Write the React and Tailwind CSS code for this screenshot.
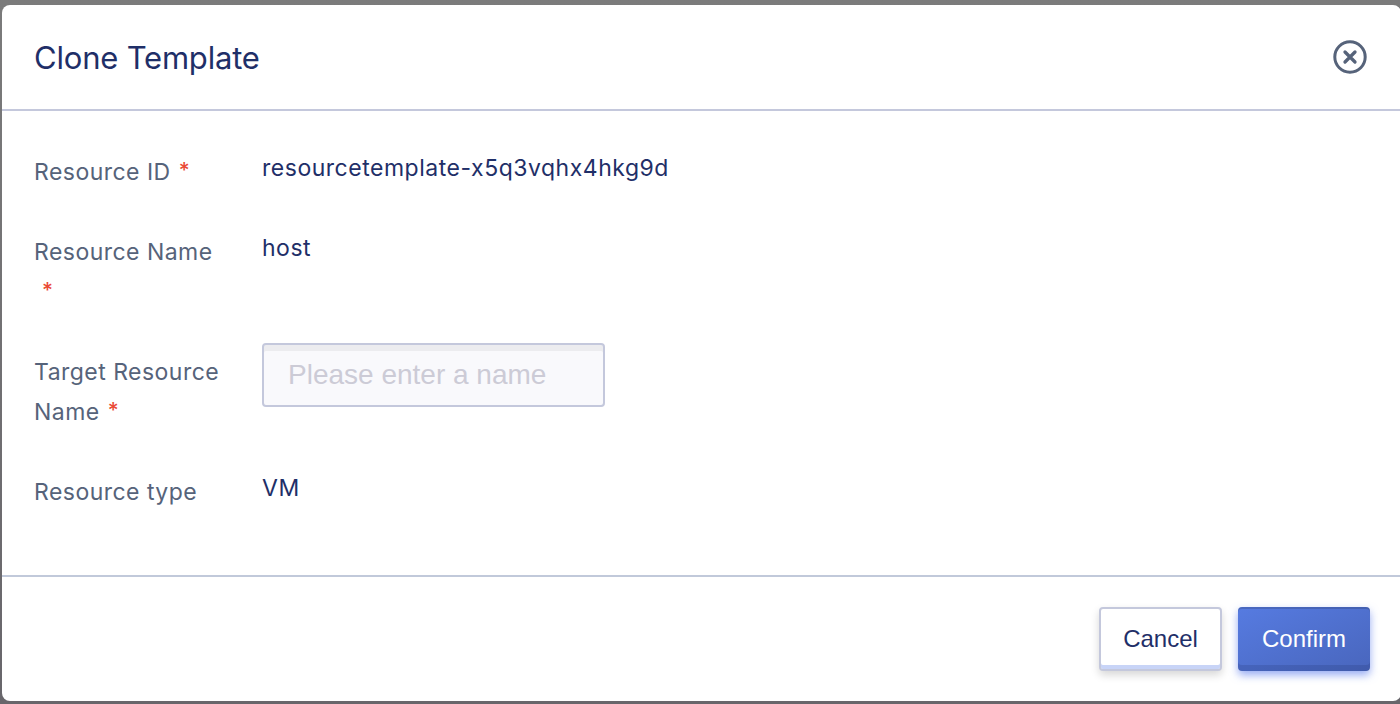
import React from "react";

function Field({ label, required, children }) {
  return (
    <div className="flex items-start">
      <div className="mr-10 w-[188px] shrink-0 pt-2 text-[23px] leading-10 tracking-[0.47px] text-[#56637a]">
        {label}
        {required && <span className="mb-0.5 ml-2 inline-block align-[2px] text-[21px] leading-5 font-medium tracking-normal text-[#ea4a36]">*</span>}
      </div>
      {children}
    </div>
  );
}

function Value({ children }) {
  return <div className="pt-1 text-[23px] leading-10 tracking-[0.52px] text-[#1f2f68]">{children}</div>;
}

export default function App() {
  return (
    <div className="h-[704px] w-[1400px] overflow-hidden bg-linear-to-b from-[#7b7b7b] to-[#68666b] pt-[5px] pl-0.5 font-['Inter',sans-serif]">
      <section className="flex h-[696px] w-[1399px] flex-col rounded-lg bg-white">
        <header className="flex h-[106px] items-center justify-between border-b-2 border-[#c4c8dc] pr-[34px] pl-8">
          <h1 className="pt-0.5 text-[31px] leading-10 tracking-[-0.2px] text-[#1f2f68]">Clone Template</h1>
          <button aria-label="Close" className="h-[34px] w-[34px] text-[#56637a]">
            <svg viewBox="0 0 34 34" className="block h-full w-full" fill="none" stroke="currentColor" strokeLinecap="round">
              <circle cx="17" cy="17" r="15.2" strokeWidth="3" />
              <path d="M12 12l10 10M22 12l-10 10" strokeWidth="3.3" />
            </svg>
          </button>
        </header>
        <main className="flex h-[464px] flex-col gap-8 pt-[33px] pl-8">
          <Field label="Resource ID" required>
            <Value>resourcetemplate-x5q3vqhx4hkg9d</Value>
          </Field>
          <Field label="Resource Name" required>
            <Value>host</Value>
          </Field>
          <Field label="Target Resource Name" required>
            <input
              placeholder="Please enter a name"
              className="-mt-px h-16 w-[343px] rounded border-2 border-[#c4c8dc] bg-[#f9f9fc] px-6 font-['Liberation_Sans',sans-serif] text-[28px] text-[#1f2f68] shadow-[inset_0_6px_0_#ececef] outline-none placeholder:text-[#cccbd6]"
            />
          </Field>
          <Field label="Resource type">
            <Value>VM</Value>
          </Field>
        </main>
        <footer className="flex flex-1 items-start justify-end gap-4 border-t-2 border-[#c1c9da] pt-[30px] pr-[31px] font-['Liberation_Sans',sans-serif] text-2xl">
          <button className="h-16 w-[123px] rounded border-2 border-[#c4c8dc] bg-white text-[#1f2f68] shadow-[inset_0_-4px_0_#c8d4f7,0_4px_8px_rgba(0,0,0,0.16)]">
            Cancel
          </button>
          <button className="h-16 w-[132px] rounded bg-linear-to-br from-[#567be1] to-[#4966bd] text-white shadow-[inset_0_2px_0_rgba(0,0,0,0.14),inset_0_-6px_0_rgba(20,30,80,0.16),0_4px_8px_rgba(80,115,235,0.6)]">
            Confirm
          </button>
        </footer>
      </section>
    </div>
  );
}
